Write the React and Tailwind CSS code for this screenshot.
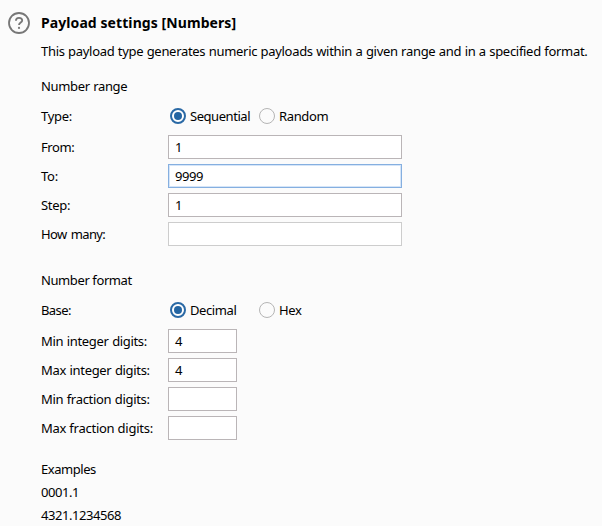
function Radio({ name, checked, className, children }) {
  return (
    <label className={`flex h-5 items-center ${className}`}>
      <input type="radio" name={name} defaultChecked={checked} className="peer sr-only" />
      <span className="mr-1 flex size-4 shrink-0 items-center justify-center rounded-full border border-[#b5b5b5] peer-checked:border-2 peer-checked:border-[#2a69a5] peer-checked:bg-white peer-checked:*:bg-[#2465a2]">
        <span className="size-2 rounded-full" />
      </span>
      {children}
    </label>
  );
}

function Field({ label, value = "", small, state = "normal", spacing = "" }) {
  const look = {
    normal: "border-[#bab5b7]",
    focused: "border-[#85afe0] shadow-[inset_0_0_0_1px_#d5e5f8]",
    disabled: "border-[#cdcdcd]",
  }[state];
  return (
    <div className="flex h-6 items-center">
      <span className={`w-[127px] shrink-0 ${spacing}`}>{label}</span>
      <div className={`flex h-6 items-center border bg-white pl-1.5 tracking-[-0.45px] ${small ? "w-[69px]" : "w-[234px]"} ${look}`}>
        {value}
      </div>
    </div>
  );
}

export default function App() {
  return (
    <main className="flex h-[526px] w-[602px] overflow-hidden bg-[#fbfbfb] pt-3 pl-2 font-['Noto_Sans',sans-serif] text-[13px] leading-5 whitespace-nowrap text-black">
      <svg width="22" height="22" viewBox="0 0 22 22" fill="none" className="mr-[11px] shrink-0">
        <circle cx="11" cy="11" r="10" stroke="#777" strokeWidth="1.8" />
        <path d="M7.9 8.8C7.9 6.8 9.1 5.8 11 5.8s3.2 1 3.2 2.7c0 2-3.2 2.2-3.2 4.6" stroke="#777" strokeWidth="1.8" />
        <circle cx="11" cy="15.9" r="1.1" fill="#777" />
      </svg>
      <div>
        <h1 className="text-[14px] leading-[22px] font-bold tracking-[0.08px]">Payload settings [Numbers]</h1>
        <p className="mt-[7px] tracking-[-0.3px] [word-spacing:0.33px]">This payload type generates numeric payloads within a given range and in a specified format.</p>
        <h2 className="mt-[15px] tracking-[-0.35px] [word-spacing:0.5px]">Number range</h2>
        <div className="mt-2.5 flex h-5">
          <span className="w-[129px] tracking-[-0.3px]">Type:</span>
          <Radio name="type" checked className="w-[89px] tracking-[-0.45px]">Sequential</Radio>
          <Radio name="type" className="tracking-[-0.35px]">Random</Radio>
        </div>
        <div className="mt-[9px] flex flex-col gap-[5px]">
          <Field label="From:" value="1" spacing="tracking-[-0.4px]" />
          <Field label="To:" value="9999" state="focused" spacing="tracking-[-0.2px]" />
          <Field label="Step:" value="1" spacing="tracking-[-0.3px]" />
          <Field label="How many:" state="disabled" spacing="tracking-[-0.6px] [word-spacing:1.2px]" />
        </div>
        <h2 className="mt-6 tracking-[-0.4px]">Number format</h2>
        <div className="mt-2.5 flex h-5">
          <span className="w-[129px] tracking-[-0.6px]">Base:</span>
          <Radio name="base" checked className="w-[89px] tracking-[-0.4px]">Decimal</Radio>
          <Radio name="base" className="tracking-[-0.4px]">Hex</Radio>
        </div>
        <div className="mt-[9px] flex flex-col gap-[5px]">
          <Field label="Min integer digits:" value="4" small spacing="tracking-[-0.34px] [word-spacing:0.6px]" />
          <Field label="Max integer digits:" value="4" small spacing="tracking-[-0.34px] [word-spacing:0.6px]" />
          <Field label="Min fraction digits:" small spacing="tracking-[-0.3px] [word-spacing:0.3px]" />
          <Field label="Max fraction digits:" small spacing="tracking-[-0.25px]" />
        </div>
        <div className="mt-[18px] leading-[23px] tracking-[-0.45px]">
          <h2>Examples</h2>
          <p>0001.1</p>
          <p>4321.1234568</p>
        </div>
      </div>
    </main>
  );
}
